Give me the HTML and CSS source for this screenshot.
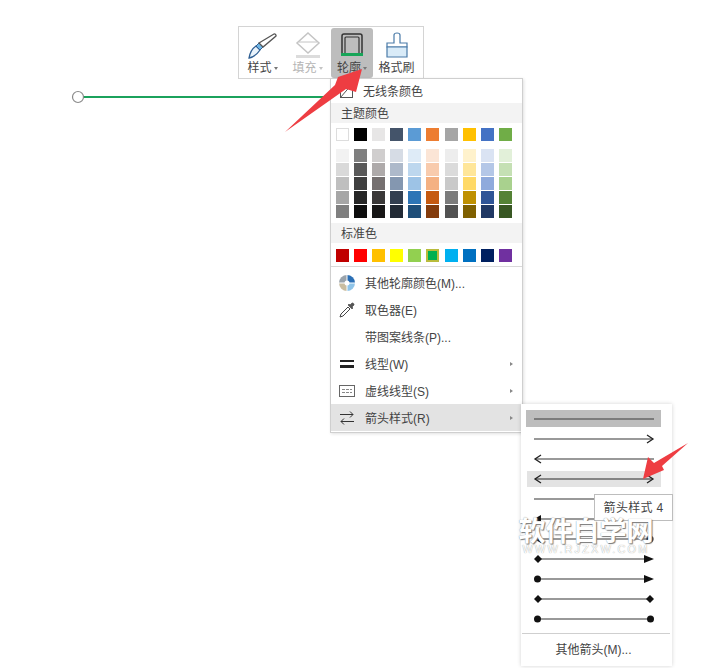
FILE: index.html
```html
<!DOCTYPE html>
<html lang="zh">
<head>
<meta charset="utf-8">
<title>箭头样式</title>
<link rel="stylesheet" href="styles.css">
</head>
<body>
<main class="canvas">
  <svg class="shape" width="290" height="20" viewBox="0 0 290 20">
    <line x1="10" y1="10" x2="285" y2="10" stroke="#1ba25c" stroke-width="2"/>
    <circle cx="10" cy="10" r="5.500" fill="#fff" stroke="#8a8a8a" stroke-width="1.200"/>
  </svg>

  <div class="toolbar">
    <div class="tool">
      <svg class="tool-icon" width="32" height="28" viewBox="0 0 32 28">
        <path d="M2 26c1-6 4-10 7-12l4 4c-2 3-6 7-11 8z" fill="#e9f3fb" stroke="#2f5f93" stroke-width="1.300"/>
        <path d="M9 14l3-3 4 4-3 3z" fill="#6fb6e6" stroke="#2f5f93" stroke-width="1"/>
        <path d="M12 11L27 2c1-.5 2.500 1 2 2L16 15z" fill="#fff" stroke="#555" stroke-width="1.300"/>
      </svg>
      <span class="tool-label">样式<i class="caret"></i></span>
    </div>
    <div class="tool disabled">
      <svg class="tool-icon" width="32" height="28" viewBox="0 0 32 28">
        <path d="M16 1l11 10-11 10L5 11z" fill="#fff" stroke="#c4c4c4" stroke-width="1.500"/>
        <path d="M7 10h18" stroke="#c4c4c4"/>
        <path d="M4 23h24v3H4z" fill="#dcdcdc"/>
      </svg>
      <span class="tool-label">填充<i class="caret"></i></span>
    </div>
    <div class="tool active">
      <svg class="tool-icon" width="32" height="28" viewBox="0 0 32 28">
        <path d="M6 21V4c0-1 1-2 2-2h16c1 0 2 1 2 2v17" fill="none" stroke="#333" stroke-width="1.500"/>
        <path d="M9 21V6c0-.7.300-1 1-1h12c.7 0 1 .3 1 1v15" fill="none" stroke="#333" stroke-width="1.200"/>
        <rect x="5" y="21" width="22" height="3" fill="#17a558"/>
      </svg>
      <span class="tool-label">轮廓<i class="caret"></i></span>
    </div>
    <div class="tool brush">
      <svg class="tool-icon" width="32" height="28" viewBox="0 0 32 28">
        <path d="M13 3c0-1 1-2 3-2s3 1 3 2v8h7v4H6v-4h7z" fill="#fff" stroke="#4a7ba8" stroke-width="1.200"/>
        <path d="M6 15h20v10H6z" fill="#d9ebf8" stroke="#4a7ba8" stroke-width="1.200"/>
      </svg>
      <span class="tool-label">格式刷</span>
    </div>
  </div>

  <div class="menu">
    <div class="nofill">
      <svg class="nofill-icon" width="16" height="17" viewBox="0 0 16 17">
        <rect x="1.500" y="1.500" width="12" height="14" fill="#fff" stroke="#555"/>
        <line x1="1.500" y1="15.500" x2="13.500" y2="1.500" stroke="#555"/>
      </svg>
      <span>无线条颜色</span>
    </div>
    <div class="menu-heading">主题颜色</div>
    <div class="swatches theme">
      <b style="background:#fff" class="edge"></b><b style="background:#000"></b><b style="background:#e7e6e6"></b><b style="background:#44546a"></b><b style="background:#5b9bd5"></b><b style="background:#ed7d31"></b><b style="background:#a5a5a5"></b><b style="background:#ffc000"></b><b style="background:#4472c4"></b><b style="background:#70ad47"></b>
    </div>
    <div class="swatches tints">
      <b style="background:#f2f2f2"></b><b style="background:#7f7f7f"></b><b style="background:#d0cece"></b><b style="background:#d6dce5"></b><b style="background:#deebf7"></b><b style="background:#fbe5d6"></b><b style="background:#ededed"></b><b style="background:#fff2cc"></b><b style="background:#dae3f3"></b><b style="background:#e2f0d9"></b>
      <b style="background:#d9d9d9"></b><b style="background:#595959"></b><b style="background:#aeaaaa"></b><b style="background:#adb9ca"></b><b style="background:#bdd7ee"></b><b style="background:#f8cbad"></b><b style="background:#dbdbdb"></b><b style="background:#ffe699"></b><b style="background:#b4c7e7"></b><b style="background:#c5e0b4"></b>
      <b style="background:#bfbfbf"></b><b style="background:#3f3f3f"></b><b style="background:#757070"></b><b style="background:#8497b0"></b><b style="background:#9dc3e6"></b><b style="background:#f4b183"></b><b style="background:#c9c9c9"></b><b style="background:#ffd966"></b><b style="background:#8faadc"></b><b style="background:#a9d18e"></b>
      <b style="background:#a6a6a6"></b><b style="background:#262626"></b><b style="background:#3a3838"></b><b style="background:#333f50"></b><b style="background:#2e75b6"></b><b style="background:#c55a11"></b><b style="background:#7c7c7c"></b><b style="background:#bf9000"></b><b style="background:#2f5597"></b><b style="background:#548235"></b>
      <b style="background:#7f7f7f"></b><b style="background:#0d0d0d"></b><b style="background:#171616"></b><b style="background:#222a35"></b><b style="background:#1f4e79"></b><b style="background:#843c0c"></b><b style="background:#525252"></b><b style="background:#7f6000"></b><b style="background:#203864"></b><b style="background:#385723"></b>
    </div>
    <div class="menu-heading spaced">标准色</div>
    <div class="swatches standard">
      <b style="background:#c00000"></b><b style="background:#ff0000"></b><b style="background:#ffc000"></b><b style="background:#ffff00"></b><b style="background:#92d050"></b><b style="background:#00b050" class="picked"></b><b style="background:#00b0f0"></b><b style="background:#0070c0"></b><b style="background:#002060"></b><b style="background:#7030a0"></b>
    </div>
    <div class="rows">
      <div class="row">
        <svg width="18" height="18" viewBox="0 0 18 18">
          <path d="M9 1a8 8 0 0 1 8 8H9z" fill="#2b6fb5"/>
          <path d="M17 9a8 8 0 0 1-8 8V9z" fill="#8fc4e8"/>
          <path d="M9 17a8 8 0 0 1-8-8h8z" fill="#c9bda0"/>
          <path d="M1 9a8 8 0 0 1 8-8v8z" fill="#9aa3ab"/>
          <path d="M9 1v16M1 9h16" stroke="#fff" stroke-width="1"/>
          <circle cx="9" cy="9" r="2.500" fill="#fff"/>
        </svg>
        <span>其他轮廓颜色(M)...</span>
      </div>
      <div class="row">
        <svg width="18" height="18" viewBox="0 0 18 18">
          <path d="M2 16l1-3 7-7 2 2-7 7z" fill="#fff" stroke="#444"/>
          <path d="M10 4l4 4 1-1-1-1 2-2c.5-1-1-2.500-2-2l-2 2-1-1z" fill="#555" stroke="#444" stroke-width=".6"/>
        </svg>
        <span>取色器(E)</span>
      </div>
      <div class="row"><i class="blank"></i><span>带图案线条(P)...</span></div>
      <div class="row">
        <svg width="18" height="18" viewBox="0 0 18 18"><path d="M2 5h14v2H2z" fill="#222"/><path d="M2 10h14v3H2z" fill="#222"/></svg>
        <span>线型(W)</span><i class="more"></i>
      </div>
      <div class="row">
        <svg width="18" height="18" viewBox="0 0 18 18"><rect x="1.500" y="3.500" width="15" height="11" fill="#fff" stroke="#666"/><path d="M4 7.500h10M4 10.500h10" stroke="#888" stroke-dasharray="3 1"/></svg>
        <span>虚线线型(S)</span><i class="more"></i>
      </div>
      <div class="row current">
        <svg width="18" height="18" viewBox="0 0 18 18"><path d="M2 5.500h13M12 2.500l3 3-3 3M16 12.500H3M6 9.500l-3 3 3 3" fill="none" stroke="#333"/></svg>
        <span>箭头样式(R)</span><i class="more"></i>
      </div>
    </div>
  </div>

  <div class="submenu">
    <div class="arrow-row selected"><svg class="line" viewBox="0 0 120 10"><path d="M0 5h120" stroke="#666" stroke-width="1.500"/></svg></div>
    <div class="arrow-row"><svg class="line" viewBox="0 0 120 10"><path d="M0 5h119" stroke="#777" stroke-width="1.500"/><path d="M113 1l6 4-6 4" fill="none" stroke="#222" stroke-width="1.300"/></svg></div>
    <div class="arrow-row"><svg class="line" viewBox="0 0 120 10"><path d="M120 5H1" stroke="#777" stroke-width="1.500"/><path d="M7 1L1 5l6 4" fill="none" stroke="#222" stroke-width="1.300"/></svg></div>
    <div class="arrow-row hover"><svg class="line" viewBox="0 0 120 10"><path d="M1 5h118" stroke="#666" stroke-width="1.500"/><path d="M7 1L1 5l6 4M113 1l6 4-6 4" fill="none" stroke="#222" stroke-width="1.300"/></svg></div>
    <div class="arrow-row"><svg class="line" viewBox="0 0 120 10"><path d="M0 5h120" stroke="#777" stroke-width="1.500"/></svg></div>
    <div class="arrow-row"><svg class="line" viewBox="0 0 120 10"><path d="M4 5h112" stroke="#777" stroke-width="1.500"/><path d="M0 5l7-4v8z" fill="#111"/><path d="M120 5l-7-4v8z" fill="#111"/></svg></div>
    <div class="arrow-row"><svg class="line" viewBox="0 0 120 10"><path d="M4 5h112" stroke="#777" stroke-width="1.500"/><path d="M0 5l7-4v8z" fill="#111"/><circle cx="116" cy="5" r="3.500" fill="#111"/></svg></div>
    <div class="arrow-row"><svg class="line" viewBox="0 0 120 10"><path d="M4 5h112" stroke="#777" stroke-width="1.500"/><path d="M4 1l4 4-4 4-4-4z" fill="#111"/><path d="M120 5l-10-4v8z" fill="#111"/></svg></div>
    <div class="arrow-row"><svg class="line" viewBox="0 0 120 10"><path d="M4 5h112" stroke="#777" stroke-width="1.500"/><circle cx="3.500" cy="5" r="3.500" fill="#111"/><path d="M120 5l-10-4v8z" fill="#111"/></svg></div>
    <div class="arrow-row"><svg class="line" viewBox="0 0 120 10"><path d="M4 5h112" stroke="#777" stroke-width="1.500"/><path d="M4 1l4 4-4 4-4-4z" fill="#111"/><path d="M116 1l4 4-4 4-4-4z" fill="#111"/></svg></div>
    <div class="arrow-row"><svg class="line" viewBox="0 0 120 10"><path d="M4 5h112" stroke="#777" stroke-width="1.500"/><circle cx="3.500" cy="5" r="3.500" fill="#111"/><circle cx="116.500" cy="5" r="3.500" fill="#111"/></svg></div>
    <div class="submenu-foot">其他箭头(M)...</div>
  </div>

  <div class="tooltip">箭头样式 4</div>

  <div class="watermark">
    <div class="wm-title">软件自学网</div>
    <div class="wm-url">WWW.RJZXW.COM</div>
  </div>

  <svg class="pointer pointer-a" width="90" height="76" viewBox="0 0 90 76">
    <path d="M1 64L51 17 54 9 78 1 72 24 62 21z" fill="#ee3d42"/>
  </svg>
  <svg class="pointer pointer-b" width="48" height="40" viewBox="0 0 48 40">
    <path d="M46 2L20 25 22 29 1 38 6 16 12 22z" fill="#ee3d42"/>
  </svg>
</main>
</body>
</html>
```

FILE: styles.css
```css
* { box-sizing: border-box; }

html, body {
  margin: 0;
  background: #fff;
}

.canvas {
  position: relative;
  width: 704px;
  height: 668px;
  overflow: hidden;
  font-family: "Liberation Sans", "Noto Sans CJK SC", sans-serif;
  font-size: 12px;
  color: #444;
}

.shape {
  position: absolute;
  left: 68px;
  top: 87px;
}

.toolbar {
  position: absolute;
  left: 238px;
  top: 26px;
  width: 186px;
  height: 53px;
  display: flex;
  padding: 1px 3px 0 1px;
  background: #fff;
  border: 1px solid #d4d4d4;
}

.tool {
  width: 45px;
  height: 50px;
  display: flex;
  flex-direction: column;
  align-items: center;
  padding-top: 4px;
  border-radius: 3px;
}

.tool.active {
  width: 42px;
  margin-left: 1px;
  background: #bdbdbd;
}

.tool.brush { margin-left: 1px; }

.tool.disabled .tool-label { color: #b5b5b5; }

.tool-icon { flex: none; }

.tool-label {
  line-height: 16px;
  white-space: nowrap;
  display: flex;
  align-items: center;
  gap: 2px;
}

.caret {
  width: 0;
  height: 0;
  border-left: 2.500px solid transparent;
  border-right: 2.500px solid transparent;
  border-top: 3px solid #777;
}

.tool.disabled .caret { border-top-color: #c4c4c4; }

.menu {
  position: absolute;
  left: 330px;
  top: 78px;
  width: 193px;
  height: 355px;
  background: #fff;
  border: 1px solid #cfcfcf;
  box-shadow: 1px 1px 3px rgba(0, 0, 0, .12);
}

.nofill {
  height: 24px;
  display: flex;
  align-items: center;
  gap: 8px;
  padding: 0 0 2px 8px;
}

.nofill-icon { flex: none; }

.menu-heading {
  height: 20px;
  line-height: 22px;
  padding-left: 10px;
  background: #f3f3f3;
}

.menu-heading.spaced { margin-top: 5px; }

.swatches {
  display: grid;
  grid-template-columns: repeat(10, 13px);
  column-gap: 5.100px;
  padding-left: 5px;
}

.swatches b { display: block; height: 13px; }

.swatches.theme { margin-top: 5px; }

.swatches.theme .edge { border: 1px solid #ddd; }

.swatches.tints {
  margin-top: 8px;
  row-gap: 1px;
}

.swatches.standard { margin-top: 6px; }

.swatches.standard .picked {
  border: 2px solid #b9bc3c;
}

.rows {
  margin-top: 4px;
  padding-top: 2px;
  border-top: 1px solid #d9d9d9;
}

.row {
  height: 27px;
  display: flex;
  align-items: center;
  padding: 0 9px 0 7px;
  gap: 9px;
}

.row svg { flex: none; }

.row .blank { width: 18px; flex: none; }

.row.current { background: #e3e3e3; }

.more {
  margin-left: auto;
  width: 0;
  height: 0;
  border-top: 2.500px solid transparent;
  border-bottom: 2.500px solid transparent;
  border-left: 3px solid #888;
}

.submenu {
  position: absolute;
  left: 521px;
  top: 404px;
  width: 151px;
  height: 262px;
  padding: 6px 11px 0 5px;
  background: #fff;
  box-shadow: 0 0 4px rgba(0, 0, 0, .18);
}

.arrow-row {
  height: 20px;
  display: flex;
  align-items: center;
  justify-content: center;
}

.arrow-row.selected {
  height: 17px;
  margin-bottom: 2px;
  background: #bdbdbd;
}

.arrow-row.hover {
  height: 16px;
  margin: 2px 0 2px 1px;
  background: #e3e3e3;
}

.line {
  width: 120px;
  height: 10px;
  overflow: visible;
}

.submenu-foot {
  position: absolute;
  left: 1px;
  right: 2px;
  bottom: 0;
  height: 33px;
  padding-right: 5px;
  line-height: 32px;
  text-align: center;
  border-top: 1px solid #cfcfcf;
}

.tooltip {
  position: absolute;
  left: 594px;
  top: 494px;
  width: 79px;
  height: 27px;
  line-height: 26px;
  text-align: center;
  background: #fff;
  border: 1px solid #bdbdbd;
  letter-spacing: .3px;
}

.watermark {
  position: absolute;
  left: 515px;
  top: 521px;
  width: 142px;
  text-align: center;
  color: #fff;
  pointer-events: none;
}

.wm-title {
  font-size: 27px;
  line-height: 22px;
  font-weight: 700;
  white-space: nowrap;
  text-shadow: 0 0 1px #888, 1px 1px 1px #777;
}

.wm-url {
  font-size: 11px;
  line-height: 11px;
  margin-top: 1px;
  letter-spacing: 2.100px;
  white-space: nowrap;
  text-shadow: 0 0 1px #888;
}

.pointer { position: absolute; }

.pointer-a { left: 284px; top: 68px; }

.pointer-b { left: 642px; top: 441px; }
```
